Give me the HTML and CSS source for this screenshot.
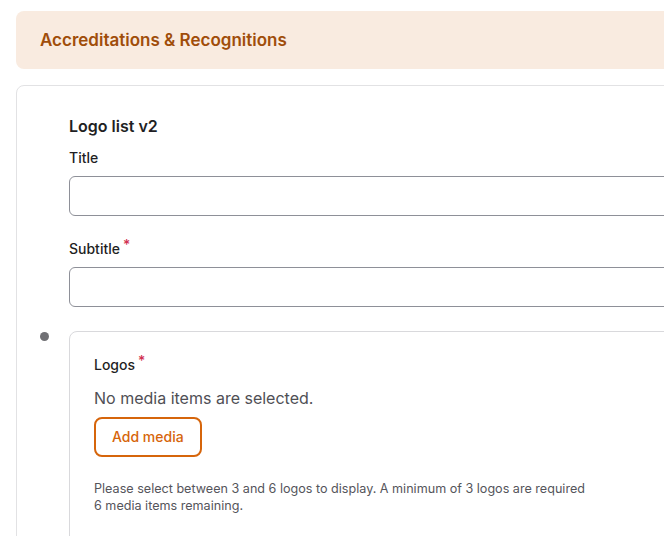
FILE: index.html
```html
<!DOCTYPE html>
<html lang="en">
<head>
<meta charset="utf-8">
<title>Accreditations &amp; Recognitions</title>
<link rel="stylesheet" href="styles.css">
</head>
<body>
<div class="page">
  <div class="section-header">
    <h2 class="section-title">Accreditations &amp; Recognitions</h2>
  </div>
  <div class="card">
    <h3 class="block-title">Logo list v2</h3>
    <div class="field">
      <label class="label">Title</label>
      <input class="input" type="text">
    </div>
    <div class="field">
      <label class="label">Subtitle<span class="req">*</span></label>
      <input class="input" type="text">
    </div>
    <div class="item-row">
      <span class="dot"></span>
      <div class="media-box">
        <div class="label">Logos<span class="req">*</span></div>
        <p class="empty">No media items are selected.</p>
        <button class="btn" type="button">Add media</button>
        <p class="help">Please select between 3 and 6 logos to display. A minimum of 3 logos are required<br>6 media items remaining.</p>
      </div>
    </div>
  </div>
</div>
</body>
</html>
```
FILE: styles.css
```css
html, body {
  margin: 0;
  padding: 0;
  background: #ffffff;
  overflow: hidden;
}
body {
  font-family: Inter, "Noto Sans", "Liberation Sans", sans-serif;
  color: #1f1f24;
}
.page {
  width: 740px;
  padding: 11px 0 0 16px;
  display: flex;
  flex-direction: column;
  gap: 16px;
}
.section-header {
  height: 58px;
  background: #f9ebe0;
  border-radius: 8px;
  display: flex;
  align-items: center;
  padding-left: 24px;
}
.section-title {
  margin: 0;
  font-size: 17px;
  font-weight: 600;
  color: #a04d0a;
  line-height: 24px;
}
.card {
  border: 1px solid #e2e2e4;
  border-radius: 8px;
  padding: 28px 0 40px 52px;
  height: 520px;
}
.block-title {
  margin: 0 0 10px 0;
  font-size: 16px;
  font-weight: 600;
  line-height: 24px;
  color: #1f1f24;
}
.field {
  display: flex;
  flex-direction: column;
  gap: 8px;
  margin-bottom: 22px;
}
.label {
  display: block;
  font-size: 14px;
  font-weight: 500;
  line-height: 20px;
  color: #1f1f24;
}
.req {
  color: #d1304f;
  margin-left: 3px;
  font-size: 14px;
  vertical-align: 4px;
  line-height: 1;
}
.input {
  box-sizing: border-box;
  height: 40px;
  width: 100%;
  border: 1px solid #8e9098;
  border-radius: 6px;
  background: #ffffff;
  font: inherit;
}
.item-row {
  display: flex;
  align-items: flex-start;
  gap: 20px;
  margin-left: -29px;
  margin-top: 24px;
}
.dot {
  flex: none;
  width: 9px;
  height: 9px;
  border-radius: 50%;
  background: #707074;
  margin-top: 1px;
}
.media-box {
  flex: 1;
  border: 1px solid #d9d9dc;
  border-radius: 8px;
  padding: 22px 24px 30px 24px;
  height: 300px;
}
.empty {
  margin: 11px 0 7px 0;
  font-size: 16px;
  line-height: 24px;
  color: #4f4f55;
}
.btn {
  box-sizing: border-box;
  height: 40px;
  padding: 0 16px;
  border: 2px solid #d6650b;
  border-radius: 8px;
  background: #ffffff;
  color: #d6650b;
  font-family: inherit;
  font-size: 14px;
  font-weight: 500;
  line-height: 20px;
}
.help {
  margin: 24px 0 0 0;
  font-size: 12.6px;
  line-height: 16.5px;
  color: #55555b;
}
```
